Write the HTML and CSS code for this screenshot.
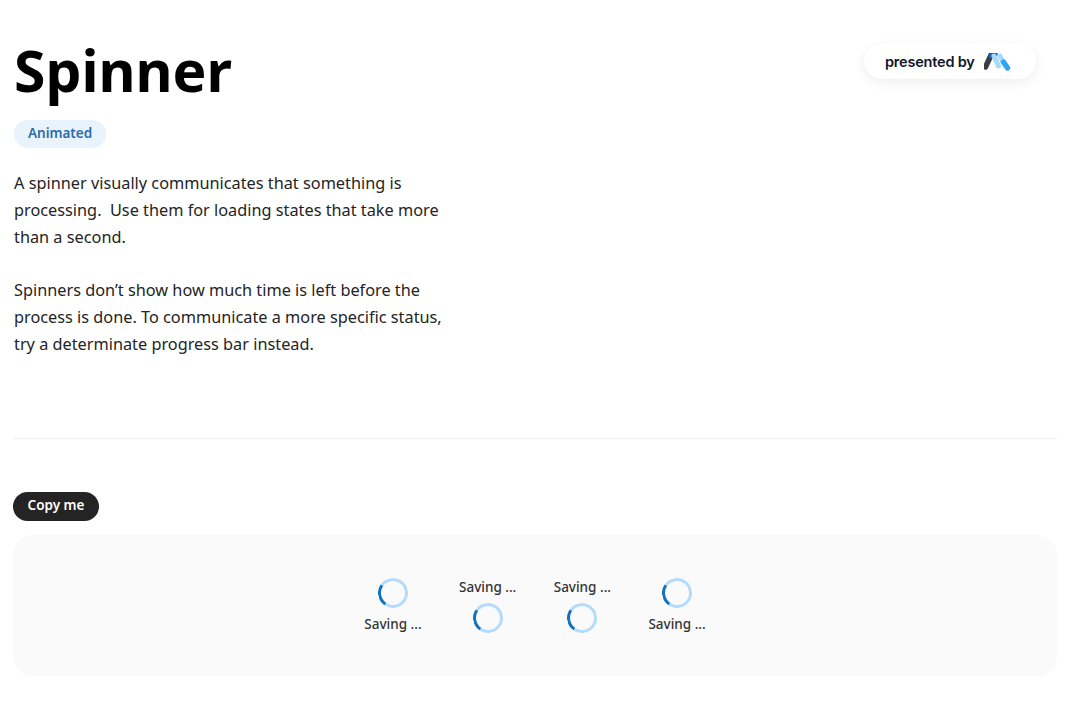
FILE: index.html
```html
<!DOCTYPE html>
<html lang="en">
<head>
    <meta charset="UTF-8">
    <meta name="viewport" content="width=device-width, initial-scale=1.0">
    <title>Spinner</title>
    <link rel="stylesheet" href="styles.css">
</head>
<body>
    <div class="page">
        <div class="header">
            <div class="intro">
                <h1>Spinner</h1>
                <span class="badge">Animated</span>
                <p>A spinner visually communicates that something is processing.&nbsp; Use them for loading states that take more than a second.</p>
                <p>Spinners don’t show how much time is left before the process is done. To communicate a more specific status, try a determinate progress bar instead.</p>
            </div>
            <div class="presented">
                <span>presented by</span>
                <svg class="logo" width="27" height="18" viewBox="0 0 27 18">
                    <path d="M7.5 1 L1.5 14" stroke="#3a3d44" stroke-width="5.4" stroke-linecap="round"/>
                    <path d="M7.5 3 L11 1" stroke="#0b6fc4" stroke-width="5.4" stroke-linecap="round"/>
                    <path d="M10 3 L14.5 13" stroke="#a9d8fb" stroke-width="5" stroke-linecap="round"/>
                    <path d="M16 3 L19 9" stroke="#a9d8fb" stroke-width="5" stroke-linecap="round"/>
                    <path d="M19.5 9 L23.5 15" stroke="#2ea6f5" stroke-width="5.4" stroke-linecap="round"/>
                </svg>
            </div>
        </div>

        <hr class="divider">

        <span class="copy-btn">Copy me</span>

        <div class="panel">
            <div class="saving">
                <div class="spinner"></div>
                <span>Saving ...</span>
            </div>
            <div class="saving reverse">
                <div class="spinner"></div>
                <span>Saving ...</span>
            </div>
            <div class="saving reverse">
                <div class="spinner"></div>
                <span>Saving ...</span>
            </div>
            <div class="saving">
                <div class="spinner"></div>
                <span>Saving ...</span>
            </div>
        </div>
    </div>
</body>
</html>
```

FILE: styles.css
```css
body {
    margin: 0;
    background-color: #fff;
    color: #1f1f1f;
    font-family: "Noto Sans", "Open Sans", Arial, sans-serif;
}

.page {
    padding: 0 23px 0 13px;
}

.header {
    display: flex;
    justify-content: space-between;
    align-items: flex-start;
    height: 438px;
}

.intro {
    width: 445px;
    padding-left: 1px;
}

h1 {
    margin: 0;
    padding-top: 29px;
    font-size: 57px;
    line-height: 83px;
    font-weight: 700;
    color: #000;
}

.badge {
    display: inline-block;
    margin-top: 8px;
    padding: 0 14px;
    height: 28px;
    line-height: 26px;
    font-size: 13.5px;
    font-weight: 600;
    color: #2a6cad;
    background-color: #e9f3fc;
    border-radius: 14px;
}

p {
    margin: 22px 0 0;
    font-size: 16.3px;
    line-height: 26.8px;
    color: #242424;
}

p + p {
    margin-top: 26.6px;
}

.presented {
    display: flex;
    align-items: center;
    gap: 9px;
    margin: 44px 21px 0 0;
    width: 172px;
    height: 35px;
    box-sizing: border-box;
    padding-left: 21px;
    border-radius: 18px;
    background-color: #fff;
    box-shadow: 0 3px 12px rgba(0, 0, 0, 0.07);
    font-family: Inter, sans-serif;
    font-size: 14.5px;
    font-weight: 600;
    letter-spacing: -0.2px;
    color: #11162b;
}

.logo {
    flex-shrink: 0;
}

.divider {
    margin: 0;
    border: none;
    border-top: 1px solid #f0f0f0;
}

.copy-btn {
    display: block;
    width: 86px;
    height: 29px;
    margin-top: 53px;
    text-align: center;
    line-height: 26px;
    font-size: 13.5px;
    font-weight: 600;
    color: #fff;
    background-color: #242424;
    border-radius: 15px;
}

.panel {
    display: flex;
    justify-content: center;
    align-items: center;
    gap: 36.7px;
    height: 141px;
    margin-top: 14px;
    background-color: #fafafa;
    border-radius: 20px;
}

.saving {
    display: flex;
    flex-direction: column;
    align-items: center;
    gap: 7px;
    width: 58px;
    font-size: 13.5px;
    font-weight: 500;
    color: #333;
}

.saving span {
    line-height: 18px;
    white-space: nowrap;
}

.reverse {
    flex-direction: column-reverse;
}

.spinner {
    width: 24px;
    height: 24px;
    border: 3px solid #b3dbfb;
    border-left-color: #1272bd;
    border-radius: 50%;
    transform: rotate(-10deg);
    animation: spin 1s linear infinite paused;
}

@keyframes spin {
    to { transform: rotate(350deg); }
}
```
